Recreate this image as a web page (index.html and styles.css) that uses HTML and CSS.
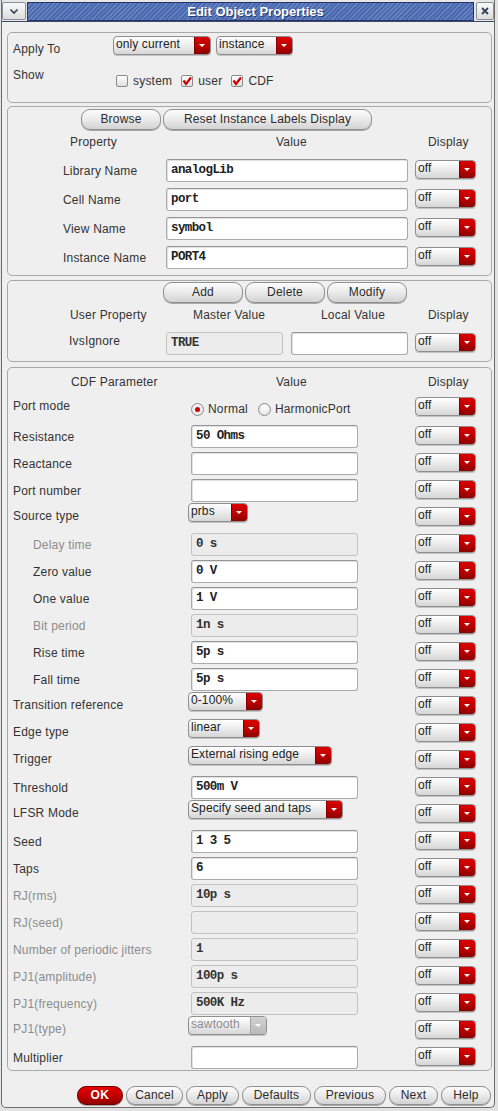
FILE: index.html
```html
<!DOCTYPE html>
<html>
<head>
<meta charset="utf-8">
<title>Edit Object Properties</title>
<link rel="stylesheet" href="styles.css">
</head>
<body>
<div class="win">
  <div class="titlebar">
    <div class="tb-btn tb-menu"><svg width="10" height="7" viewBox="0 0 10 7"><path d="M1.5 1.5 L5 5 L8.5 1.5" fill="none" stroke="#34405e" stroke-width="1.6"/></svg></div>
    <div class="tb-bar"><span class="tb-title">Edit Object Properties</span></div>
    <div class="tb-btn tb-close"><svg width="8" height="8" viewBox="0 0 8 8"><path d="M1 1 L7 7 M7 1 L1 7" fill="none" stroke="#34405e" stroke-width="1.8"/></svg></div>
  </div>

  <div class="client">
    <div class="grp g1">
      <div class="g1-row1">
        <span class="lb g1-lb">Apply To</span>
        <div class="dd w97"><span class="t">only current</span><span class="b"></span></div>
        <div class="dd w76"><span class="t">instance</span><span class="b"></span></div>
      </div>
      <div class="g1-row2">
        <span class="lb g1-lb2">Show</span>
        <div class="checks">
          <span class="cb"></span><span class="cbl">system</span>
          <span class="cb on"><svg width="10" height="10" viewBox="0 0 10 10"><path d="M1.5 4.5 L4 8 L9 1.5" fill="none" stroke="#c80000" stroke-width="2.2"/></svg></span><span class="cbl">user</span>
          <span class="cb on"><svg width="10" height="10" viewBox="0 0 10 10"><path d="M1.5 4.5 L4 8 L9 1.5" fill="none" stroke="#c80000" stroke-width="2.2"/></svg></span><span class="cbl">CDF</span>
        </div>
      </div>
    </div>

    <div class="grp g2">
      <div class="btnrow br2">
        <div class="btn w80">Browse</div>
        <div class="btn w209">Reset Instance Labels Display</div>
      </div>
      <div class="hdr h2"><span>Property</span><span>Value</span><span>Display</span></div>
      <div class="rows2">
        <div class="r2"><span class="lb">Library Name</span><div class="in">analogLib</div><span></span><div class="dd disp"><span class="t">off</span><span class="b"></span></div></div>
        <div class="r2"><span class="lb">Cell Name</span><div class="in">port</div><span></span><div class="dd disp"><span class="t">off</span><span class="b"></span></div></div>
        <div class="r2"><span class="lb">View Name</span><div class="in">symbol</div><span></span><div class="dd disp"><span class="t">off</span><span class="b"></span></div></div>
        <div class="r2"><span class="lb">Instance Name</span><div class="in">PORT4</div><span></span><div class="dd disp"><span class="t">off</span><span class="b"></span></div></div>
      </div>
    </div>

    <div class="grp g3">
      <div class="btnrow br3">
        <div class="btn w80">Add</div>
        <div class="btn w80">Delete</div>
        <div class="btn w80">Modify</div>
      </div>
      <div class="hdr h3"><span>User Property</span><span>Master Value</span><span>Local Value</span><span>Display</span></div>
      <div class="r3"><span class="lb ivs">IvsIgnore</span><div class="in dis">TRUE</div><span></span><div class="in"></div><span></span><div class="dd disp"><span class="t">off</span><span class="b"></span></div></div>
    </div>

    <div class="grp g4">
      <div class="hdr h4"><span>CDF Parameter</span><span>Value</span><span>Display</span></div>
      <div class="r4 rport">
        <span class="lb lbup">Port mode</span>
        <div class="radios"><span class="rb on"></span><span class="rbl">Normal</span><span class="rb"></span><span class="rbl">HarmonicPort</span></div>
        <div class="dd disp"><span class="t">off</span><span class="b"></span></div>
      </div>
      <div class="rows4">
        <div class="r4"><span class="lb">Resistance</span><div class="in w167">50 Ohms</div><div class="dd disp"><span class="t">off</span><span class="b"></span></div></div>
        <div class="r4"><span class="lb">Reactance</span><div class="in w167"></div><div class="dd disp"><span class="t">off</span><span class="b"></span></div></div>
        <div class="r4"><span class="lb">Port number</span><div class="in w167"></div><div class="dd disp"><span class="t">off</span><span class="b"></span></div></div>
        <div class="r4"><span class="lb lbup">Source type</span><div class="dd vdd w60"><span class="t">prbs</span><span class="b"></span></div><div class="dd disp"><span class="t">off</span><span class="b"></span></div></div>
        <div class="r4"><span class="lb ind gray">Delay time</span><div class="in w167 dis">0 s</div><div class="dd disp"><span class="t">off</span><span class="b"></span></div></div>
        <div class="r4"><span class="lb ind">Zero value</span><div class="in w167">0 V</div><div class="dd disp"><span class="t">off</span><span class="b"></span></div></div>
        <div class="r4"><span class="lb ind">One value</span><div class="in w167">1 V</div><div class="dd disp"><span class="t">off</span><span class="b"></span></div></div>
        <div class="r4"><span class="lb ind gray">Bit period</span><div class="in w167 dis">1n s</div><div class="dd disp"><span class="t">off</span><span class="b"></span></div></div>
        <div class="r4"><span class="lb ind">Rise time</span><div class="in w167">5p s</div><div class="dd disp"><span class="t">off</span><span class="b"></span></div></div>
        <div class="r4"><span class="lb ind">Fall time</span><div class="in w167">5p s</div><div class="dd disp"><span class="t">off</span><span class="b"></span></div></div>
        <div class="r4"><span class="lb lbup">Transition reference</span><div class="dd vdd w74"><span class="t">0-100%</span><span class="b"></span></div><div class="dd disp"><span class="t">off</span><span class="b"></span></div></div>
        <div class="r4"><span class="lb lbup">Edge type</span><div class="dd vdd w72"><span class="t">linear</span><span class="b"></span></div><div class="dd disp"><span class="t">off</span><span class="b"></span></div></div>
        <div class="r4"><span class="lb lbup">Trigger</span><div class="dd vdd w143"><span class="t">External rising edge</span><span class="b"></span></div><div class="dd disp"><span class="t">off</span><span class="b"></span></div></div>
        <div class="r4"><span class="lb">Threshold</span><div class="in w167">500m V</div><div class="dd disp"><span class="t">off</span><span class="b"></span></div></div>
        <div class="r4"><span class="lb lbup">LFSR Mode</span><div class="dd vdd w154"><span class="t">Specify seed and taps</span><span class="b"></span></div><div class="dd disp"><span class="t">off</span><span class="b"></span></div></div>
        <div class="r4"><span class="lb">Seed</span><div class="in w167">1 3 5</div><div class="dd disp"><span class="t">off</span><span class="b"></span></div></div>
        <div class="r4"><span class="lb">Taps</span><div class="in w167">6</div><div class="dd disp"><span class="t">off</span><span class="b"></span></div></div>
        <div class="r4"><span class="lb gray">RJ(rms)</span><div class="in w167 dis">10p s</div><div class="dd disp"><span class="t">off</span><span class="b"></span></div></div>
        <div class="r4"><span class="lb gray">RJ(seed)</span><div class="in w167 dis"></div><div class="dd disp"><span class="t">off</span><span class="b"></span></div></div>
        <div class="r4"><span class="lb gray">Number of periodic jitters</span><div class="in w167 dis">1</div><div class="dd disp"><span class="t">off</span><span class="b"></span></div></div>
        <div class="r4"><span class="lb gray">PJ1(amplitude)</span><div class="in w167 dis">100p s</div><div class="dd disp"><span class="t">off</span><span class="b"></span></div></div>
        <div class="r4"><span class="lb gray">PJ1(frequency)</span><div class="in w167 dis">500K Hz</div><div class="dd disp"><span class="t">off</span><span class="b"></span></div></div>
        <div class="r4"><span class="lb gray lbup">PJ1(type)</span><div class="dd vdd w78 ddis"><span class="t">sawtooth</span><span class="b"></span></div><div class="dd disp"><span class="t">off</span><span class="b"></span></div></div>
        <div class="r4"><span class="lb">Multiplier</span><div class="in w167"></div><div class="dd disp"><span class="t">off</span><span class="b"></span></div></div>
      </div>
    </div>

    <div class="footer">
      <div class="btn fb ok w46">OK</div>
      <div class="btn fb w57">Cancel</div>
      <div class="btn fb w53">Apply</div>
      <div class="btn fb w69">Defaults</div>
      <div class="btn fb w72">Previous</div>
      <div class="btn fb w49">Next</div>
      <div class="btn fb w50">Help</div>
    </div>
  </div>
</div>
</body>
</html>
```

FILE: styles.css
```css
* { box-sizing: border-box; }
html, body { margin: 0; padding: 0; }
body {
  width: 498px;
  height: 1111px;
  background: #e2e2e2;
  font-family: "Liberation Sans", Arial, sans-serif;
  font-size: 12px;
  letter-spacing: 0.2px;
  color: #333;
  overflow: hidden;
}
.win {
  margin-left: 1px;
  width: 494px;
  height: 1108px;
  background: #efefef;
  border: 1px solid #6c6c6c;
  border-top: none;
  border-radius: 0 0 5px 5px;
  display: flex;
  flex-direction: column;
}

/* title bar */
.titlebar {
  height: 22px;
  display: flex;
  align-items: flex-start;
  padding-top: 2px;
  border-bottom: 1px solid #3e4a66;
  background: #e6e6e6;
}
.tb-btn {
  height: 18px;
  border: 1px solid #8a8f9c;
  border-radius: 2px;
  background: linear-gradient(#fafafa, #dcdcdc);
  display: flex;
  align-items: center;
  justify-content: center;
}
.tb-menu { width: 24px; }
.tb-close { width: 18px; margin-left: 2px; }
.tb-bar {
  flex: 1;
  height: 19px;
  margin-left: 1px;
  border: 1px solid #23356a;
  background: repeating-linear-gradient(135deg, #4a69ae 0px, #4a69ae 2px, #6884c2 2px, #6884c2 3.2px);
  display: flex;
  align-items: center;
  justify-content: center;
  padding-left: 10px;
}
.tb-title {
  color: #fff;
  font-weight: bold;
  font-size: 13px;
  letter-spacing: 0;
  text-shadow: 1px 1px 0 #2b3c70;
}

/* client */
.client {
  flex: 1;
  display: flex;
  flex-direction: column;
  padding: 0 1px 0 5px;
}
.grp {
  border: 1px solid #a9a9a9;
  border-radius: 5px;
  width: 485px;
}
.g1 { height: 71px; margin-top: 10px; padding: 3px 0 0 5px; }
.g2 { height: 170px; margin-top: 3px; padding-top: 2px; }
.g3 { height: 82px; margin-top: 4px; padding-top: 1px; }
.g4 { height: 704px; margin-top: 5px; padding-top: 7px; }

.lb { white-space: nowrap; color: #333; }
.gray { color: #8c8c8c; }
.ind { padding-left: 20px; }

/* section 1 */
.g1-row1 { display: flex; align-items: flex-start; gap: 5px; height: 20px; }
.g1-lb { width: 95px; margin-top: 6px; }
.g1-row2 { display: flex; align-items: flex-start; margin-top: 12px; }
.g1-lb2 { width: 103px; line-height: 14px; }
.checks { display: flex; align-items: center; margin-top: 5px; }
.cb {
  width: 12px; height: 12px;
  border: 1px solid #8b8b8b;
  border-radius: 2px;
  background: linear-gradient(#ffffff, #dedede);
  display: flex; align-items: center; justify-content: center;
}
.cbl { margin-left: 5px; margin-right: 9px; margin-top: 1px; }

/* dropdowns */
.dd {
  display: flex;
  height: 19px;
  border: 1px solid #8e8e8e;
  border-radius: 4px;
  background: linear-gradient(#ffffff, #eeeeee 45%, #d6d6d6);
  overflow: hidden;
  box-shadow: 0 1px 0 #c4c4c4;
}
.dd .t {
  flex: 1;
  padding-left: 2px;
  line-height: 15px;
  white-space: nowrap;
  color: #222;
  letter-spacing: 0.1px;
}
.dd .b {
  width: 16px;
  flex: none;
  position: relative;
  background: linear-gradient(#dc0000, #bb0000 55%, #8c0000);
  border-left: 1px solid #860000;
}
.dd .b::after {
  content: "";
  position: absolute;
  left: 4px;
  top: 7px;
  border-left: 3.5px solid transparent;
  border-right: 3.5px solid transparent;
  border-top: 3.5px solid #fff;
}
.ddis .t { color: #8c8c8c; }
.ddis .b { background: linear-gradient(#d2d2d2, #b9b9b9); border-left-color: #a5a5a5; }
.w97 { width: 98px; }
.w76 { width: 77px; }
.w60 { width: 60px; }
.w74 { width: 75px; }
.w72 { width: 73px; }
.w143 { width: 144px; }
.w154 { width: 155px; }
.w78 { width: 79px; }
.disp { width: 61px; align-self: start; margin-top: 1px; }
.vdd { align-self: start; margin-top: -3px; margin-left: -3px; }

/* inputs */
.in {
  height: 23px;
  border: 1px solid #ababab;
  border-top-color: #959595;
  border-radius: 3px;
  background: #fff;
  box-shadow: inset 1px 1px 0 #e2e2e2;
  font-family: "Liberation Mono", "Courier New", monospace;
  font-weight: bold;
  font-size: 12.5px;
  letter-spacing: -0.6px;
  line-height: 21px;
  padding-left: 4px;
  color: #222;
  white-space: pre;
}
.in.dis { background: #ececec; border-color: #c2c2c2; box-shadow: none; color: #333; }
.w167 { width: 167px; }

/* buttons */
.btnrow { display: flex; gap: 2px; }
.br2 { padding-left: 73px; }
.br3 { padding-left: 155px; }
.btn {
  height: 21px;
  border: 1px solid #8f8f8f;
  border-radius: 9px;
  background: linear-gradient(#fcfcfc, #ececec 45%, #d3d3d3);
  box-shadow: 0 1px 0 #a8a8a8;
  text-align: center;
  line-height: 19px;
  color: #2c2c2c;
  white-space: nowrap;
}
.w80 { width: 80px; }
.w209 { width: 209px; }

/* headers */
.hdr { display: grid; line-height: 14px; color: #333; }
.h2 { grid-template-columns: 206px 152px auto; padding-left: 62px; margin-top: 5px; }
.h3 { grid-template-columns: 123px 128px 107px auto; padding-left: 62px; margin-top: 5px; }
.h4 { grid-template-columns: 205px 152px auto; padding-left: 63px; }

/* section 2 rows */
.rows2 { display: flex; flex-direction: column; gap: 6px; margin-top: 10px; }
.r2 {
  display: grid;
  grid-template-columns: 103px 242px 7px 61px;
  height: 23px;
  align-items: center;
  padding-left: 55px;
}

/* section 3 row */
.r3 {
  display: grid;
  grid-template-columns: 103px 117px 8px 117px 7px 61px;
  height: 23px;
  align-items: center;
  padding-left: 55px;
  margin-top: 10px;
}
.ivs { padding-left: 6px; margin-top: -6px; }

/* section 4 rows */
.r4 {
  display: grid;
  grid-template-columns: 178px 224px 61px;
  height: 23px;
  align-items: center;
  padding-left: 5px;
}
.lbup { margin-top: -4px; }
.rport { margin-top: 7px; margin-bottom: 6px; }
.rows4 { display: flex; flex-direction: column; gap: 4px; }
.radios { display: flex; align-items: center; margin-top: 3px; }
.rb {
  width: 13px; height: 13px;
  border: 1px solid #8b8b8b;
  border-radius: 50%;
  background: radial-gradient(circle at 50% 35%, #ffffff, #dcdcdc);
  position: relative;
}
.rb.on::after {
  content: "";
  position: absolute;
  left: 3px; top: 3px;
  width: 5px; height: 5px;
  border-radius: 50%;
  background: #d00000;
}
.rbl { margin-left: 4px; margin-right: 10px; }

/* footer */
.footer {
  display: flex;
  justify-content: flex-end;
  gap: 3px;
  margin-top: 15px;
  padding-right: 2px;
}
.fb { height: 19px; line-height: 17px; border-radius: 9px; }
.ok {
  background: linear-gradient(#e40000, #bf0000 55%, #910000);
  border-color: #6e0000;
  color: #fff;
  font-weight: bold;
  letter-spacing: 0.5px;
}
.w46 { width: 46px; }
.w57 { width: 57px; }
.w53 { width: 53px; }
.w69 { width: 69px; }
.w72 { width: 72px; }
.w49 { width: 49px; }
.w50 { width: 50px; }
```
